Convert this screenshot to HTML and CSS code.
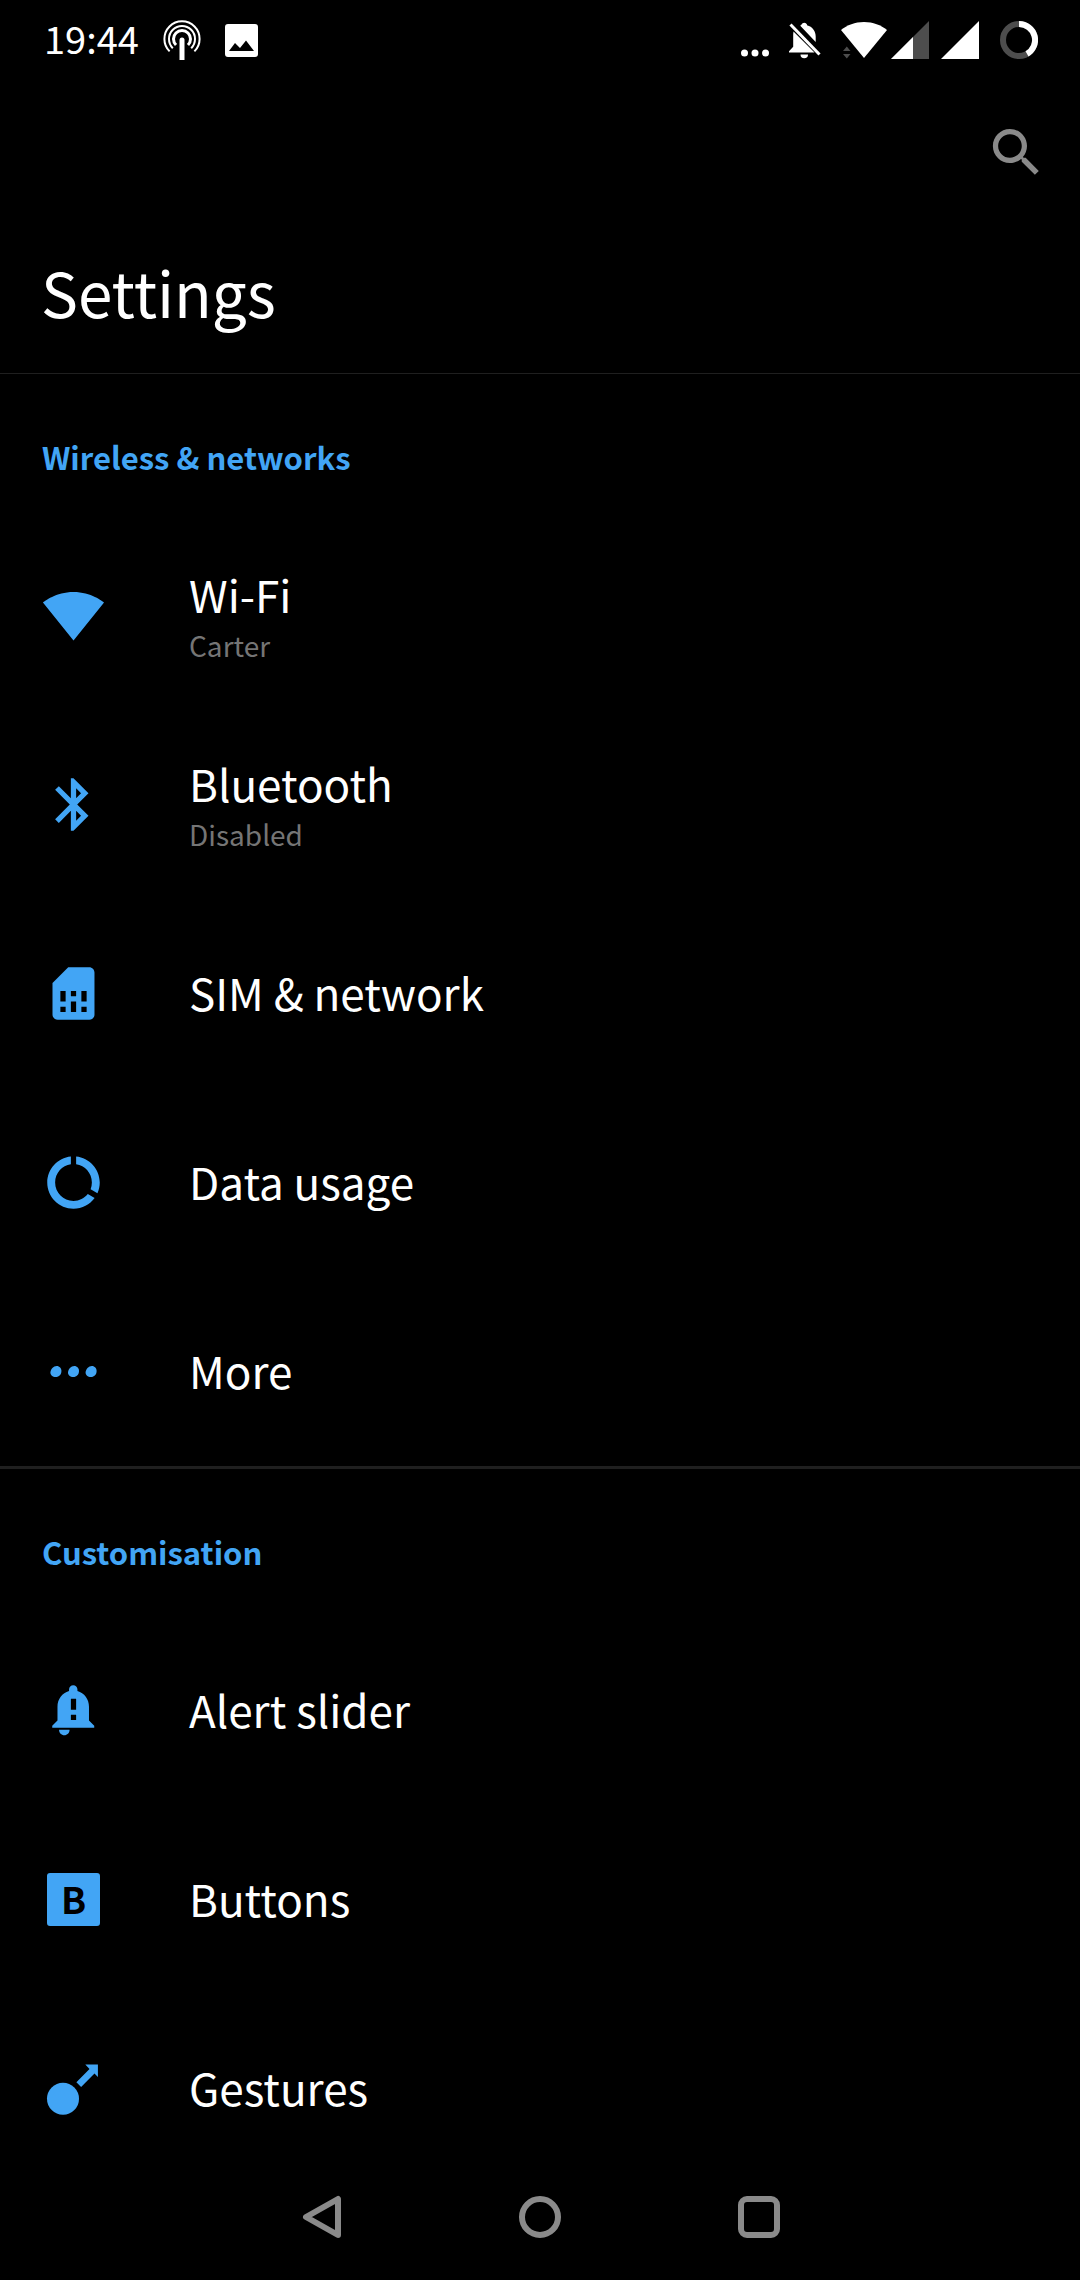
FILE: index.html
```html
<!DOCTYPE html>
<html lang="en">
<head>
    <meta charset="UTF-8">
    <meta name="viewport" content="width=device-width, initial-scale=1.0">
    <title>Settings</title>
    <link rel="stylesheet" href="styles.css">
</head>
<body>
<div class="status-bar">
    <div class="status-left">
        <span class="clock">19:44</span>
        <svg width="38" height="42" viewBox="0 0 38 42" fill="none" stroke="#fff" stroke-width="2">
            <path d="M6.6 32.4A17.6 17.6 0 1 1 31.4 32.4"/>
            <path d="M9.8 29.2A13 13 0 1 1 28.2 29.2"/>
            <path d="M13 26A8.5 8.5 0 1 1 25 26" stroke-width="3"/>
            <path d="M16.500 41V21a2.500 2.500 0 0 1 5 0v20z" fill="#fff" stroke="none"/>
        </svg>
        <svg width="33" height="33" viewBox="0 0 33 33">
            <path fill="#fff" fill-rule="evenodd" d="M3 0h27a3 3 0 0 1 3 3v27a3 3 0 0 1-3 3H3a3 3 0 0 1-3-3V3a3 3 0 0 1 3-3zM4 27h25L21 16.500l-6 7.500-5-5z"/>
        </svg>
    </div>
    <div class="status-right">
        <svg width="28" height="38" viewBox="0 0 28 38" fill="#fff">
            <circle cx="3.500" cy="32" r="3.500"/>
            <circle cx="14" cy="32" r="3.500"/>
            <circle cx="24.500" cy="32" r="3.500"/>
        </svg>
        <svg width="32" height="38" viewBox="0 0 32 38" fill="#fff">
            <path d="M11.500 5a1 1 0 0 1 1-1.200V3.500a3 3 0 0 1 5.500 0v.7c5.500 1.300 8.700 6 8.700 11.300v5.500z"/>
            <path d="M4.500 10.500L25.500 31.500H0v-1.200l4.200-4.500V14.500c0-1.500 0-2.800.3-4z"/>
            <path d="M11.500 33.500h7.500a3.750 3.750 0 0 1-7.500 0z"/>
            <path d="M1.500 3.500L30.500 33.500" fill="none" stroke="#fff" stroke-width="3"/>
        </svg>
        <div class="signal-group">
            <svg width="46" height="38" viewBox="0 0 46 38">
                <path fill="#fff" d="M23 37L0 9C6 4 14 1 23 1s17 3 23 8z"/>
                <path fill="#4d4d4d" d="M2 30l3.800-4.500L9.500 30zM2 33l3.800 4.500L9.500 33z"/>
            </svg>
            <svg width="89" height="38" viewBox="0 0 89 38">
                <path fill="#4d4d4d" d="M0 38L38 0v38z"/>
                <path fill="#fff" d="M0 38l22-22v22zM50 38L88 0v38z"/>
            </svg>
        </div>
        <svg width="38" height="38" viewBox="0 0 38 38" fill="none" stroke-width="6">
            <circle cx="19" cy="19" r="16" stroke="#4d4d4d"/>
            <path d="M19 3A16 16 0 0 1 27 32.900" stroke="#fff"/>
        </svg>
    </div>
</div>

<header class="header">
    <div class="toolbar">
        <button type="button" class="icon-button" aria-label="Search">
            <svg class="icon" viewBox="0 0 24 24">
                <path d="M15.500 14h-.79l-.28-.27C15.410 12.590 16 11.110 16 9.500 16 5.910 13.090 3 9.500 3S3 5.910 3 9.500 5.910 16 9.500 16c1.610 0 3.090-.59 4.230-1.570l.27.28v.79l5 4.990L20.490 19l-4.990-5zm-6 0C7.010 14 5 11.990 5 9.500S7.010 5 9.500 5 14 7.010 14 9.500 11.990 14 9.500 14z"/>
            </svg>
        </button>
    </div>
    <h1>Settings</h1>
</header>

<main class="settings">
    <section>
        <h2>Wireless &amp; networks</h2>
        <a class="row" href="#wifi">
            <svg class="icon" viewBox="0 0 24 24"><path d="M12.010 21.490L23.640 7c-.45-.34-4.930-4-11.640-4C5.280 3 .81 6.660.36 7l11.630 14.490.01.01.01-.01z"/></svg>
            <span class="label">
                <span class="name">Wi-Fi</span>
                <span class="summary">Carter</span>
            </span>
        </a>
        <a class="row" href="#bluetooth">
            <svg class="icon" viewBox="0 0 24 24"><path d="M17.710 7.710L12 2h-1v7.590L6.410 5 5 6.410 10.590 12 5 17.590 6.410 19 11 14.410V22h1l5.710-5.710-4.300-4.290 4.300-4.290zM13 5.830l1.880 1.880L13 9.590V5.830zm1.880 10.460L13 18.170v-3.760l1.880 1.880z"/></svg>
            <span class="label">
                <span class="name">Bluetooth</span>
                <span class="summary">Disabled</span>
            </span>
        </a>
        <a class="row" href="#sim">
            <svg class="icon" viewBox="0 0 24 24"><path d="M19.990 4c0-1.100-.89-2-1.990-2h-8L4 8v12c0 1.100.9 2 2 2h12.010c1.100 0 1.990-.9 1.990-2l-.01-16zM9 19H7v-2h2v2zm8 0h-2v-2h2v2zm-8-4H7v-4h2v4zm4 4h-2v-4h2v4zm0-6h-2v-2h2v2zm4 2h-2v-4h2v4z"/></svg>
            <span class="label"><span class="name">SIM &amp; network</span></span>
        </a>
        <a class="row" href="#data">
            <svg class="icon" viewBox="0 0 24 24"><path d="M13 2.050v3.030c3.390.49 6 3.390 6 6.920 0 .9-.18 1.750-.48 2.540l2.600 1.530c.56-1.240.88-2.620.88-4.070 0-5.180-3.950-9.450-9-9.950zM12 19c-3.870 0-7-3.130-7-7 0-3.530 2.610-6.430 6-6.920V2.050c-5.060.5-9 4.760-9 9.950 0 5.520 4.470 10 9.990 10 3.310 0 6.240-1.610 8.060-4.090l-2.600-1.530C16.170 17.980 14.210 19 12 19z"/></svg>
            <span class="label"><span class="name">Data usage</span></span>
        </a>
        <a class="row" href="#more">
            <svg class="icon" viewBox="0 0 24 24">
                <path id="dot" d="M5.600 9.900c1.100 0 1.800.9 1.800 1.900 0 1.300-.9 2.300-2.200 2.300-1.200 0-2-.7-2-1.700 0-1.200 1.200-2.500 2.400-2.500z"/>
                <use href="#dot" x="6.700"/>
                <use href="#dot" x="13.400"/>
            </svg>
            <span class="label"><span class="name">More</span></span>
        </a>
    </section>

    <section>
        <h2>Customisation</h2>
        <a class="row" href="#alert-slider">
            <svg class="icon" viewBox="0 0 24 24"><path d="M17.900 15.800v-5.200c0-2.900-1.800-5.300-4.400-6V4c0-.9-.7-1.600-1.600-1.600S10.300 3.100 10.300 4v.6c-2.600.7-4.400 3.100-4.400 6v5.200l-2 2v.8h16v-.8zM13 15.600h-2v-2h2zM13 11.700h-2V7.500h2zM6.500 19.300h4c0 1.200-.9 2.100-2 2.100s-2-.9-2-2.100z"/></svg>
            <span class="label"><span class="name">Alert slider</span></span>
        </a>
        <a class="row" href="#buttons">
            <span class="icon letter-icon"><b>B</b></span>
            <span class="label"><span class="name">Buttons</span></span>
        </a>
        <a class="row" href="#gestures">
            <svg class="icon" viewBox="0 0 24 24">
                <circle cx="8" cy="15.900" r="6.100"/>
                <path d="M16.500 2.900h4.800v4.700l-1.300-1.300-5.100 5.100-1.800-1.800 5-5z"/>
            </svg>
            <span class="label"><span class="name">Gestures</span></span>
        </a>
    </section>
</main>

<nav class="nav-bar">
    <button type="button" aria-label="Back">
        <svg width="44" height="44" viewBox="0 0 44 44"><path d="M7 22L39 4V40z"/></svg>
    </button>
    <button type="button" aria-label="Home">
        <svg width="44" height="44" viewBox="0 0 44 44"><circle cx="22" cy="22" r="18"/></svg>
    </button>
    <button type="button" aria-label="Recents">
        <svg width="44" height="44" viewBox="0 0 44 44"><rect x="4" y="4" width="36" height="36" rx="6"/></svg>
    </button>
</nav>
</body>
</html>
```
FILE: styles.css
```css
* {
    box-sizing: border-box;
}
body {
    display: flex;
    flex-direction: column;
    height: 100vh;
    margin: 0;
    background: #000;
    color: #fff;
    font-family: "Noto Sans CJK SC", "Noto Sans", sans-serif;
}
button {
    background: none;
    border: none;
    padding: 0;
    cursor: pointer;
}
svg {
    display: block;
}

/* Status bar */
.status-bar {
    display: flex;
    justify-content: space-between;
    align-items: center;
    flex: none;
    height: 80px;
    padding: 0 42px 0 44px;
}
.status-left, .status-right, .signal-group {
    display: flex;
    align-items: center;
}
.status-left {
    gap: 24px;
}
.status-right {
    gap: 20px;
}
.signal-group {
    gap: 4px;
}
.clock {
    padding-bottom: 4px;
    font-size: 38px;
    line-height: 56px;
}

/* Header */
.header {
    flex: none;
    border-bottom: 1px solid #1f1f1f;
}
.toolbar {
    display: flex;
    justify-content: flex-end;
    align-items: center;
    height: 144px;
    padding: 0 32px;
}
h1 {
    margin: 0;
    padding: 21px 41px 36px;
    font-size: 62px;
    font-weight: 400;
    line-height: 92px;
}
.icon {
    flex: none;
    width: 63px;
    height: 63px;
    fill: #42a5f5;
}
.icon-button .icon {
    fill: #8a8a8a;
}

/* Settings list */
.settings {
    flex: 1;
    min-height: 0;
    overflow: hidden;
}
section + section {
    border-top: 3px solid #1f1f1f;
}
h2 {
    margin: 0;
    padding: 61px 42px 42px;
    color: #42a5f5;
    font-size: 31px;
    font-weight: 700;
    line-height: 44px;
}
.row {
    display: flex;
    align-items: center;
    gap: 84px;
    height: 189px;
    padding: 0 42px;
    color: #fff;
    text-decoration: none;
}
.label {
    display: flex;
    flex-direction: column;
    padding-bottom: 4px;
}
.name {
    font-size: 44px;
    line-height: 62px;
}
.summary {
    color: #757575;
    font-size: 28px;
    line-height: 40px;
}
.letter-icon {
    display: flex;
    justify-content: center;
    align-items: center;
    padding-bottom: 4px;
    border: 5px solid #000;
    border-radius: 8px;
    background: #42a5f5;
    color: #000;
    font-size: 37px;
    line-height: 48px;
}

/* Navigation bar */
.nav-bar {
    display: flex;
    justify-content: center;
    flex: none;
    height: 126px;
}
.nav-bar button {
    display: flex;
    justify-content: center;
    align-items: center;
    width: 219px;
}
.nav-bar svg {
    fill: none;
    stroke: #8a8a8a;
    stroke-width: 6;
    stroke-linejoin: round;
}
```
